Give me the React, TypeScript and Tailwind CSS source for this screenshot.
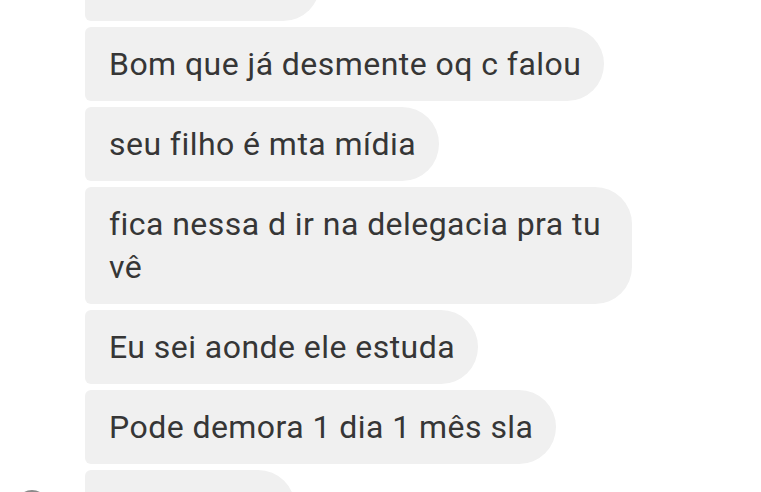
const messages: { text: React.ReactNode; width?: string }[] = [
  { text: 'Tá bom', width: 'w-[235px]' },
  { text: 'Bom que já desmente oq c falou' },
  { text: 'seu filho é mta mídia' },
  {
    text: (
      <>
        fica nessa d ir na delegacia pra tu
        <br />
        vê
      </>
    ),
    width: 'w-[547px]',
  },
  { text: 'Eu sei aonde ele estuda' },
  { text: 'Pode demora 1 dia 1 mês sla' },
  { text: 'Vai ficar', width: 'w-[210px]' },
];

export default function App() {
  return (
    <div className="h-[492px] w-full overflow-hidden bg-white font-['Roboto',sans-serif]">
      <div className="mt-[-53px] flex flex-col gap-[6px]">
        {messages.map((m, i) => {
          const last = i === messages.length - 1;
          return (
            <div key={i} className="flex items-start">
              {/* gutter for the sender avatar, only shown next to the last bubble */}
              <div className="w-[85px] shrink-0">
                {last && <div className="ml-[16px] mt-[20px] h-[32px] w-[32px] rounded-full bg-[#8a8a8a]" />}
              </div>
              <div
                className={`${m.width ?? 'w-fit'} whitespace-nowrap rounded-l-[6px] rounded-r-[37px] bg-[#f0f0f0] py-[15.5px] pl-[24px] pr-[23px] text-[32px] leading-[43px] tracking-[0.45px] text-[#363636]`}
              >
                {m.text}
              </div>
            </div>
          );
        })}
      </div>
    </div>
  );
}
